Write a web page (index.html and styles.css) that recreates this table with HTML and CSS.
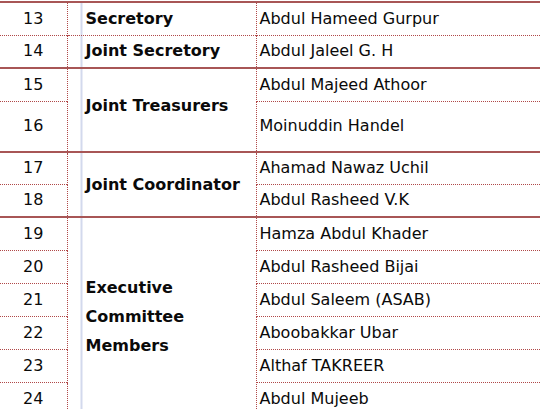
FILE: index.html
```html
<!DOCTYPE html>
<html>
<head>
<meta charset="utf-8">
<link rel="stylesheet" href="styles.css">
</head>
<body>
<table class="office">
  <colgroup><col class="c-num"><col class="c-role"><col class="c-name"></colgroup>
  <tr class="r h33 grp"><td class="num">13</td><td class="role">Secretory</td><td class="name">Abdul Hameed Gurpur</td></tr>
  <tr class="r h33"><td class="num dt">14</td><td class="role dt">Joint Secretory</td><td class="name dt">Abdul Jaleel G. H</td></tr>
  <tr class="r h33 grp"><td class="num">15</td><td class="role" rowspan="2"><span class="up">Joint Treasurers</span></td><td class="name">Abdul Majeed Athoor</td></tr>
  <tr class="r h51"><td class="num dt">16</td><td class="name dt">Moinuddin Handel</td></tr>
  <tr class="r h32 grp"><td class="num">17</td><td class="role" rowspan="2">Joint Coordinator</td><td class="name">Ahamad Nawaz Uchil</td></tr>
  <tr class="r h33"><td class="num dt">18</td><td class="name dt">Abdul Rasheed V.K</td></tr>
  <tr class="r h33 grp"><td class="num">19</td><td class="role multi" rowspan="6">Executive<br>Committee<br>Members</td><td class="name">Hamza Abdul Khader</td></tr>
  <tr class="r h33"><td class="num dt">20</td><td class="name dt">Abdul Rasheed Bijai</td></tr>
  <tr class="r h33"><td class="num dt">21</td><td class="name dt">Abdul Saleem (ASAB)</td></tr>
  <tr class="r h33"><td class="num dt">22</td><td class="name dt">Aboobakkar Ubar</td></tr>
  <tr class="r h33"><td class="num dt">23</td><td class="name dt">Althaf TAKREER</td></tr>
  <tr class="r h33"><td class="num dt">24</td><td class="name dt">Abdul Mujeeb</td></tr>
</table>
</body>
</html>
```
FILE: styles.css
```css
html, body {
  margin: 0;
  padding: 0;
  background: #ffffff;
  overflow: hidden;
}
.office {
  border-collapse: collapse;
  table-layout: fixed;
  width: 580px;
  margin-top: 1px;
  font-family: "DejaVu Sans", sans-serif;
  font-size: 16px;
  color: #0a0a0a;
}
.c-num { width: 67px; }
.c-role { width: 189px; }
.c-name { width: 324px; }
.office td {
  padding: 0;
  vertical-align: middle;
  border-right: 1px dotted #b04848;
  line-height: 18px;
  white-space: nowrap;
}
.h32 { height: 32px; }
.h33 { height: 33px; }
.h51 { height: 51px; }
.grp td { border-top: 2px solid #a85656; }
.office td.dt { border-top: 1px dotted #b04848; }
.num { text-align: center; }
.role {
  font-weight: bold;
  padding-left: 18px !important;
  background: linear-gradient(to right, transparent 13px, #d3d9ed 13px, #d3d9ed 15px, transparent 15px);
}
.name { padding-left: 3px !important; }
.up { position: relative; top: -4px; }
.multi { line-height: 29px !important; }
```
